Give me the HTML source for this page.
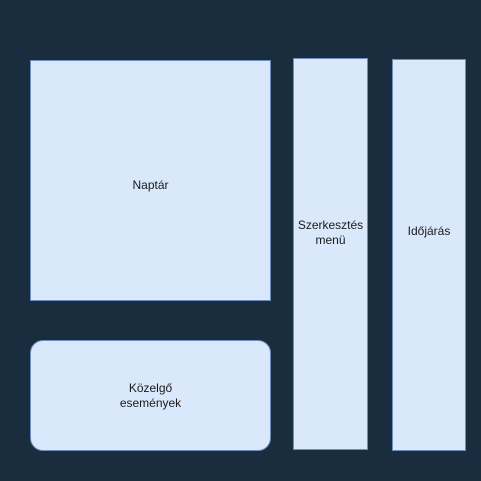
<!DOCTYPE html>
<html><head><style>
html,body{margin:0;padding:0;width:481px;height:481px;background:#1a2d3e;overflow:hidden}
.b{position:absolute;background:#dae8fc;border:1px solid #6c8ebf;box-sizing:border-box;display:flex;align-items:center;justify-content:center;text-align:center;font-family:"Liberation Sans",sans-serif;font-size:12px;color:#1a1a1a;line-height:15px}
</style></head><body>
<div class="b" style="left:30px;top:60px;width:241px;height:241px;padding-top:10px">Naptár</div>
<div class="b" style="left:30px;top:340px;width:241px;height:111px;border-radius:13px">Közelgő<br>események</div>
<div class="b" style="left:293px;top:58px;width:75px;height:392px;padding-bottom:42px">Szerkesztés<br>menü</div>
<div class="b" style="left:392px;top:59px;width:74px;height:392px;padding-bottom:48px">Időjárás</div>
</body></html>
